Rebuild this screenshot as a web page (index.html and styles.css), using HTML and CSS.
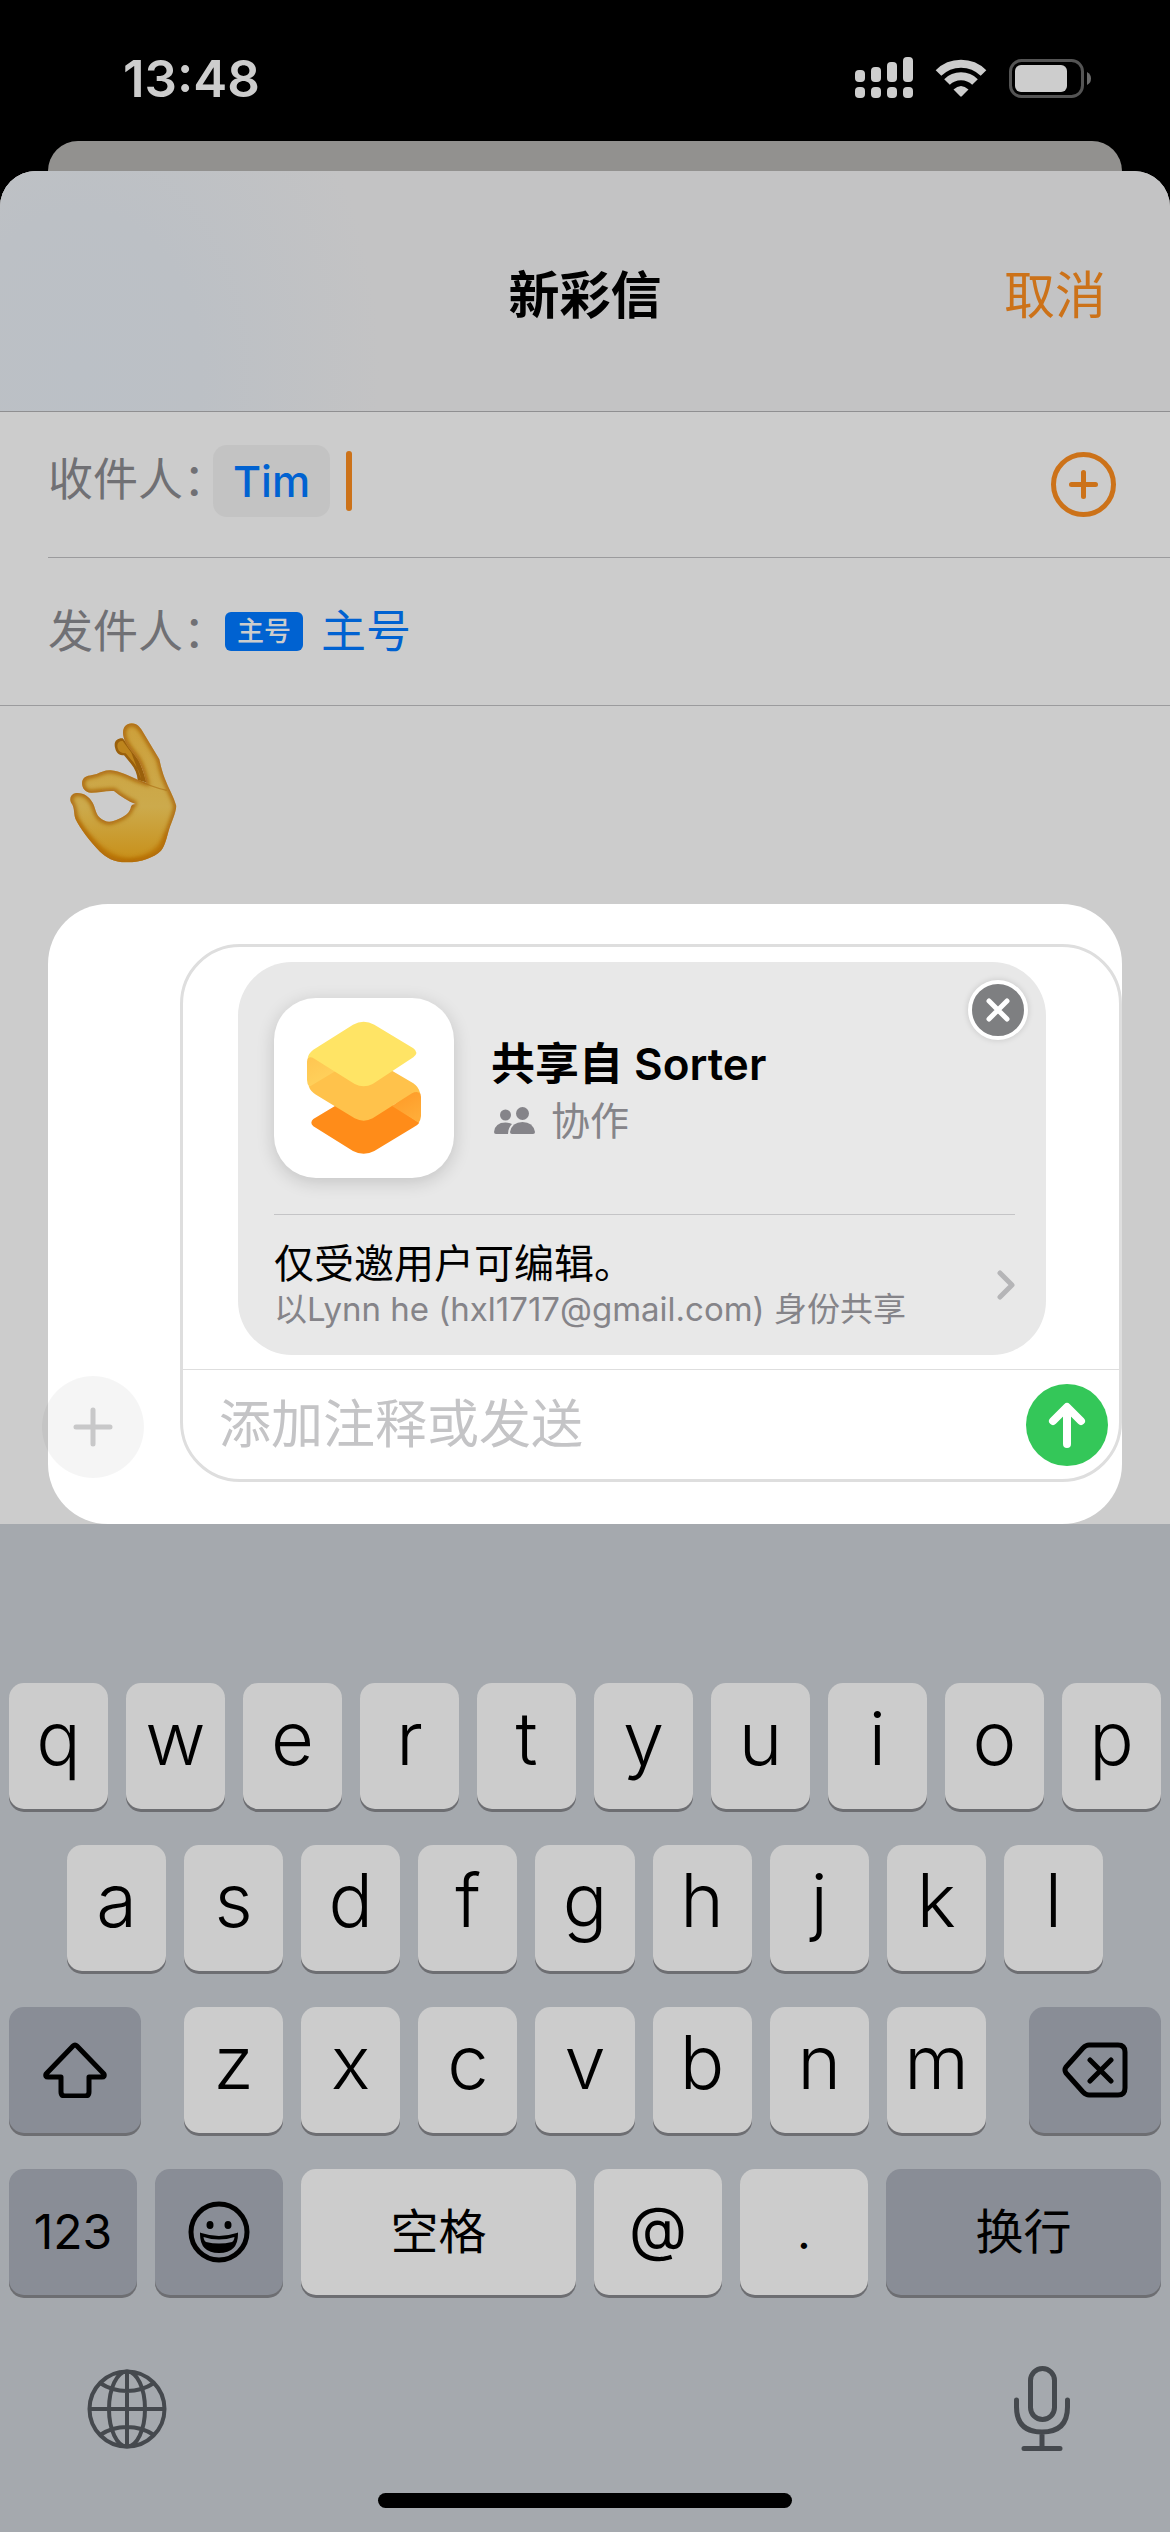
FILE: index.html
```html
<!DOCTYPE html>
<html lang="zh-CN">
<head>
<meta charset="utf-8">
<meta name="viewport" content="width=device-width, initial-scale=1">
<title>新彩信</title>
<link rel="stylesheet" href="styles.css">
</head>
<body>
<div class="status">
  <time class="clock">13:48</time>
  <div class="status-icons">
    <svg width="58" height="42" viewBox="0 0 58 42" fill="#cdcdcd" aria-hidden="true">
      <rect x="0" y="13" width="10" height="12" rx="4"/><rect x="16" y="10" width="10" height="15" rx="4"/><rect x="32" y="5" width="10" height="20" rx="4"/><rect x="48" y="0" width="10" height="25" rx="4"/>
      <rect x="0" y="30" width="10" height="11" rx="4"/><rect x="16" y="30" width="10" height="11" rx="4"/><rect x="32" y="30" width="10" height="11" rx="4"/><rect x="48" y="30" width="10" height="11" rx="4"/>
    </svg>
    <svg width="52" height="38" viewBox="0 0 52 38" aria-hidden="true">
      <g fill="none" stroke="#cdcdcd" stroke-width="8"><path d="M3.500 14 A32 32 0 0 1 48.500 14"/><path d="M12 23 A20 20 0 0 1 40 23"/></g>
      <path d="M18.500 30.500 Q26 23.500 33.500 30.500 L26.800 37.300 Q26 38 25.200 37.300Z" fill="#cdcdcd"/>
    </svg>
    <svg width="83" height="39" viewBox="0 0 83 39" aria-hidden="true">
      <rect x="1.500" y="1.500" width="72" height="36" rx="11" fill="none" stroke="#545454" stroke-width="3"/>
      <rect x="6" y="6" width="52" height="27" rx="6" fill="#cdcdcd"/><path d="M78 13 Q82 15 82 19.500 Q82 24 78 26Z" fill="#6a6a6a"/>
    </svg>
  </div>
</div>
<div class="back-sheet"></div>
<main class="sheet">
  <header class="header">
    <h1>新彩信</h1>
    <button class="cancel">取消</button>
  </header>
  <div class="row row-to">
    <label for="to">收件人：</label>
    <button class="chip">Tim</button>
    <span class="caret"></span>
    <input id="to" class="to-input" type="text">
    <button class="icon-btn" aria-label="添加联系人">
      <svg width="65" height="65" viewBox="0 0 65 65" fill="none" stroke="#cc7219" stroke-width="5" stroke-linecap="round"><circle cx="32.500" cy="32.500" r="30"/><path d="M20.500 32.500h24M32.500 20.500v24"/></svg>
    </button>
  </div>
  <div class="row row-from">
    <span class="label">发件人：</span>
    <button class="line"><span class="badge">主号</span><span>主号</span></button>
  </div>
  <div class="transcript">
    <svg class="hand" width="150" height="180" viewBox="0 0 450 540" role="img" aria-label="OK">
      <defs>
        <filter id="soft" x="-20%" y="-20%" width="140%" height="140%"><feGaussianBlur stdDeviation="7"/></filter>
        <linearGradient id="skin" x1="0" y1="0" x2="0" y2="1"><stop offset="0" stop-color="#cda03a"/><stop offset=".6" stop-color="#ccaa4c"/><stop offset="1" stop-color="#c88f17"/></linearGradient>
        <path id="palm" d="M221 112C214 86 227 70 245 70C262 70 270 82 277 93L328 178C333 200 337 217 345 237C355 264 371 290 379 318C378 337 365 366 358 386C350 410 347 434 333 452C312 472 275 487 230 487C190 487 168 472 150 455C118 422 90 385 77 358C71 342 74 325 66 312C56 298 61 282 78 279C100 277 118 290 128 308C137 325 136 338 148 352C162 365 176 368 190 363C214 355 236 345 242 325C243 317 246 313 257 312C235 304 212 290 192 273C170 271 145 278 125 278C100 279 92 254 98 240C104 226 122 227 140 222C155 216 165 210 182 211C210 213 240 229 265 240L289 248C283 226 276 198 263 178C250 158 226 136 221 112Z"/>
        <clipPath id="palmClip"><use href="#palm"/></clipPath>
      </defs>
      <path d="M196 146C189 125 201 114 218 115L262 165L292 248L263 240C262 222 255 205 243 191L222 166C208 166 199 159 196 146Z" fill="#9a600c"/>
      <path d="M203 144C199 130 207 122 218 123L244 158L273 236C270 220 263 204 250 187L227 160C214 160 206 155 203 144Z" fill="#bd841d"/>
      <use href="#palm" fill="url(#skin)"/>
      <g clip-path="url(#palmClip)"><use href="#palm" fill="none" stroke="#a96408" stroke-width="15" filter="url(#soft)"/><path d="M66 345Q150 475 235 483Q325 475 352 398" fill="none" stroke="#b96f06" stroke-width="14" opacity=".7" filter="url(#soft)"/></g>
      <path d="M265 240Q300 260 350 271" fill="none" stroke="#a86d13" stroke-width="4" opacity=".6"/>
    </svg>
  </div>
  <section class="composer">
    <button class="plus" aria-label="更多">
      <svg width="40" height="40" viewBox="0 0 40 40" stroke="#c8c8c9" stroke-width="5" stroke-linecap="round"><path d="M3 20h34M20 3v34"/></svg>
    </button>
    <div class="bubble">
      <article class="share">
        <button class="close" aria-label="移除">
          <svg width="24" height="24" viewBox="0 0 24 24" stroke="#fff" stroke-width="5" stroke-linecap="round"><path d="M3 3L21 21M21 3L3 21"/></svg>
        </button>
        <div class="app">
          <svg class="app-icon" width="180" height="180" viewBox="44 54 540 540" aria-hidden="true">
            <defs>
              <linearGradient id="foldL" x1="0" y1="0" x2=".5" y2="1"><stop offset="0" stop-color="#ffc551"/><stop offset="1" stop-color="#ffd25c"/></linearGradient>
              <linearGradient id="foldR" x1="0" y1="0" x2=".5" y2="1"><stop offset="0" stop-color="#ff9825"/><stop offset="1" stop-color="#ffac38"/></linearGradient>
            </defs>
            <path d="M162 417L232 375H400L480 428Q475 435 464 441L345 513Q313 530 281 513L162 439Q150 428 162 417Z" fill="#ff8c19"/>
            <path d="M398 378L450 338Q484 324 485 350V408Q484 421 478 428Z" fill="url(#foldR)"/>
            <path d="M148 318L228 270L398 272L462 310Q478 320 483 341Q474 331 458 340L340 415Q313 429 286 415L170 344Q153 334 148 318Z" fill="#ffc24b"/>
            <path d="M143 245Q144 222 170 232L230 272L150 320Q143 312 143 300Z" fill="url(#foldL)"/>
            <path d="M281 134Q313 117 345 134L462 205Q480 218 462 232L340 312Q313 326 286 312L165 236Q152 228 145 235Q147 220 162 209Z" fill="#ffe465"/>
          </svg>
          <div class="app-text">
            <h2>共享自 Sorter</h2>
            <p class="collab">
              <svg width="42" height="28" viewBox="0 0 42 28" fill="#858489" aria-hidden="true"><ellipse cx="11.500" cy="8" rx="5.500" ry="5.500"/><path d="M0 25Q1 15.500 11.500 15.500Q15 15.500 18 17Q14 21 14 27H2Q0 27 0 25Z"/><circle cx="28.500" cy="6.500" r="6.500"/><path d="M16 25Q18 15 28.500 15Q39 15 41 25Q41 27 39 27H18Q16 27 16 25Z"/></svg>
              <span>协作</span>
            </p>
          </div>
        </div>
        <button class="access">
          <span class="access-text"><span class="perm">仅受邀用户可编辑。</span><span class="by">以Lynn he (hxl1717@gmail.com) 身份共享</span></span>
          <svg width="18" height="30" viewBox="0 0 18 30" fill="none" stroke="#b5b5b7" stroke-width="5" stroke-linecap="round" stroke-linejoin="round"><path d="M3 3L15 15L3 27"/></svg>
        </button>
      </article>
      <div class="entry">
        <input type="text" aria-label="添加注释或发送" placeholder="添加注释或发送">
        <button class="send" aria-label="发送">
          <svg width="38" height="46" viewBox="0 0 38 46" fill="none" stroke="#fff" stroke-width="8" stroke-linecap="round" stroke-linejoin="round"><path d="M19 42V6M5 19L19 5L33 19"/></svg>
        </button>
      </div>
    </div>
  </section>
</main>
<section class="keyboard" aria-label="键盘">
  <div class="keys">
    <button>q</button><button>w</button><button>e</button><button>r</button><button>t</button><button>y</button><button>u</button><button>i</button><button>o</button><button>p</button>
  </div>
  <div class="keys keys-home">
    <button>a</button><button>s</button><button>d</button><button>f</button><button>g</button><button>h</button><button>j</button><button>k</button><button>l</button>
  </div>
  <div class="keys keys-lower">
    <button class="dark wide" aria-label="Shift"><svg width="64" height="56" viewBox="0 0 64 56" fill="none" stroke="#000" stroke-width="5" stroke-linejoin="round"><path d="M30 4Q32 2 34 4L61 32Q62 35 59 35H46V50Q46 54 42 54H22Q18 54 18 50V35H5Q2 35 3 32Z"/></svg></button>
    <div class="keys-group"><button>z</button><button>x</button><button>c</button><button>v</button><button>b</button><button>n</button><button>m</button></div>
    <button class="dark wide" aria-label="删除"><svg width="66" height="56" viewBox="0 0 66 56" fill="none" stroke="#000" stroke-width="5" stroke-linecap="round" stroke-linejoin="round"><path d="M27 3H56Q63 3 63 10V46Q63 53 56 53H27Q24 53 21 50L4 31Q2 28 4 25L21 6Q24 3 27 3ZM28 18L49 39M49 18L28 39"/></svg></button>
  </div>
  <div class="keys keys-bottom">
    <button class="dark">123</button>
    <button class="dark" aria-label="表情"><svg width="62" height="62" viewBox="0 0 62 62"><circle cx="31" cy="31" r="28" fill="none" stroke="#000" stroke-width="5"/><ellipse cx="22" cy="24" rx="3.500" ry="4"/><ellipse cx="40" cy="24" rx="3.500" ry="4"/><path d="M13 33Q31 39 49 33Q49 51 31 51Q13 51 13 33Z" fill="#000" stroke="#000" stroke-width="2"/><path d="M15.500 36Q31 41 46.500 36Q46 40 44 41Q31 44 18 41Q16 40 15.500 36Z" fill="#898d96"/></svg></button>
    <button class="space">空格</button>
    <button class="at">@</button>
    <button>.</button>
    <button class="dark return">换行</button>
  </div>
  <div class="dock">
    <button aria-label="切换键盘"><svg width="80" height="80" viewBox="0 0 80 80" fill="none" stroke="#45494e" stroke-width="4"><circle cx="40" cy="40" r="37.500"/><ellipse cx="40" cy="40" rx="18" ry="37.500"/><path d="M40 2V78M2 40H78M13 14Q25 22 40 22Q55 22 67 14M13 66Q25 58 40 58Q55 58 67 66"/></svg></button>
    <button aria-label="听写"><svg width="56" height="86" viewBox="0 0 56 86" fill="none" stroke="#45494e" stroke-width="5" stroke-linecap="round"><rect x="16.500" y="2.500" width="24" height="51" rx="12"/><path d="M2.500 34V41Q2.500 66 28 66Q53.500 66 53.500 41V34M28 67V82M10 82.500H46"/></svg></button>
  </div>
  <div class="home"></div>
</section>
</body>
</html>
```
FILE: styles.css
```css
* { box-sizing: border-box; }

body {
  margin: 0;
  min-height: 100vh;
  display: flex;
  flex-direction: column;
  background: #000;
  color: #000;
  font-family: Inter, "Noto Sans CJK SC", sans-serif;
}

button {
  margin: 0;
  padding: 0;
  border: 0;
  background: none;
  color: inherit;
  font: inherit;
}

svg { display: block; flex: none; }
h1, h2, p { margin: 0; }

/* Status bar */
.status {
  display: flex;
  justify-content: space-between;
  align-items: center;
  height: 141px;
  padding: 15px 78px 0 123px;
}
.clock { color: #cdcdcd; font-size: 51px; font-weight: 600; }
.status-icons { display: flex; align-items: center; gap: 22px; }

/* Sheet */
.back-sheet {
  height: 30px;
  margin: 0 48px;
  border-radius: 30px 30px 0 0;
  background: #92918f;
}
.sheet {
  flex: 1;
  border-radius: 36px 36px 0 0;
  background: #ccc;
}
.header {
  display: grid;
  grid-template-columns: 1fr auto 1fr;
  align-items: center;
  height: 241px;
  padding: 10px 64px 0;
  border-bottom: 1px solid #8f8f91;
  border-radius: 36px 36px 0 0;
  background:
    radial-gradient(ellipse 300px 400px at 80px 200px, #bbc0c6, #bcc0c5 40%, transparent),
    #c3c3c4;
}
h1 { grid-column: 2; font-size: 51px; font-weight: 600; line-height: 60px; }
.cancel { justify-self: end; color: #cc7219; font-size: 51px; line-height: 60px; }

.row {
  display: flex;
  align-items: center;
  margin-left: 48px;
  padding-right: 54px;
  color: #707074;
  font-size: 45px;
  line-height: 54px;
}
.row-to { height: 146px; border-bottom: 1px solid #9b9b9d; }
.row-from { height: 147px; }
.row-to label, .row-from .label { width: 165px; white-space: nowrap; }
.row-to label { margin-bottom: 10px; }
.chip {
  height: 72px;
  margin-bottom: 8px;
  padding: 0 20px;
  border-radius: 14px;
  background: #c3c3c3;
  color: #0062d1;
  font-size: 43px;
  font-weight: 500;
}
.caret {
  width: 6px;
  height: 60px;
  margin: 0 0 8px 16px;
  border-radius: 3px;
  background: #cc7219;
}
.to-input {
  flex: 1;
  min-width: 0;
  padding: 0;
  border: 0;
  outline: 0;
  background: none;
  font: inherit;
}
.line {
  display: flex;
  align-items: center;
  gap: 18px;
  margin-left: 12px;
  color: #0062d1;
}
.badge {
  padding: 0 12px;
  border-radius: 6px;
  background: #0062d1;
  color: #ccc;
  font-size: 27px;
  font-weight: 500;
  line-height: 39px;
}

.transcript { height: 199px; border-top: 1px solid #9b9b9d; }
.hand { margin: -6px 0 0 50px; }

/* Composer */
.composer {
  display: flex;
  align-items: flex-end;
  gap: 36px;
  margin: 0 48px;
  padding: 40px 0 42px;
  border-radius: 60px;
  background: #fff;
}
.plus {
  display: grid;
  place-items: center;
  flex: none;
  width: 102px;
  height: 102px;
  margin: 0 0 4px -6px;
  border-radius: 50%;
  background: rgba(0, 0, 0, .04);
}
.bubble {
  flex: 1;
  min-width: 0;
  border: 3px solid #dedede;
  border-radius: 60px;
}
.share {
  position: relative;
  margin: 15px 73px 14px 55px;
  padding: 36px 31px 0 36px;
  border-radius: 54px;
  background: #e8e8e8;
}
.close {
  position: absolute;
  top: 18px;
  right: 18px;
  display: grid;
  place-items: center;
  width: 60px;
  height: 60px;
  border: 4px solid #fff;
  border-radius: 50%;
  background: #7e7f81;
  box-shadow: 0 0 6px rgba(0, 0, 0, .15);
}
.app {
  display: flex;
  gap: 37px;
  padding-bottom: 36px;
  border-bottom: 1px solid #c4c4c6;
}
.app-icon {
  border-radius: 42px;
  background: #fff;
  box-shadow: 0 4px 18px rgba(0, 0, 0, .16);
}
.app-text { padding-top: 36px; }
h2 { font-size: 44px; font-weight: 600; line-height: 60px; }
.collab {
  display: flex;
  align-items: center;
  gap: 15px;
  padding-left: 3px;
  color: #858489;
  font-size: 39px;
  line-height: 54px;
}
.access {
  display: flex;
  justify-content: space-between;
  align-items: center;
  width: 100%;
  height: 140px;
  text-align: left;
}
.access-text { display: flex; flex-direction: column; white-space: nowrap; }
.perm { font-size: 40px; line-height: 48px; }
.by { color: #858489; font-size: 33px; line-height: 42px; }
.entry {
  display: flex;
  align-items: center;
  height: 110px;
  padding: 0 11px 0 36px;
  border-top: 1px solid #dedede;
}
.entry input {
  flex: 1;
  min-width: 0;
  padding: 0;
  border: 0;
  outline: 0;
  background: none;
  font: inherit;
  font-size: 52px;
}
.entry input::placeholder { color: #c4c4c6; }
.send {
  display: grid;
  place-items: center;
  width: 82px;
  height: 82px;
  border-radius: 50%;
  background: #34c759;
}

/* Keyboard */
.keyboard {
  display: flex;
  flex-direction: column;
  gap: 36px;
  padding: 159px 9px 24px;
  background: #a5a9ae;
}
.keys, .keys-group { display: flex; gap: 18px; }
.keys button {
  display: grid;
  place-items: center;
  flex: 1 1 0;
  min-width: 0;
  height: 126px;
  padding-bottom: 16px;
  border-radius: 15px;
  background: #ccc;
  box-shadow: 0 3px 0 #6d6e72;
  font-size: 74px;
  font-weight: 350;
  line-height: 90px;
}
.keys .dark { background: #898d96; }
.keys-home { padding: 0 58px; }
.keys-lower { gap: 43px; }
.keys-lower .wide { flex: 132 1 0; padding: 0; }
.keys-group { flex: 802 1 0; }
.keys-bottom button { flex: 128 1 0; padding: 0; font-size: 48px; font-weight: 400; }
.keys-bottom .space, .keys-bottom .return { flex-grow: 275; }
.keys-bottom .at { padding-bottom: 8px; font-size: 60px; }
.dock {
  display: flex;
  justify-content: space-between;
  align-items: center;
  height: 86px;
  margin-top: 35px;
  padding: 0 91px 0 78px;
}
.home {
  align-self: center;
  width: 36%;
  height: 15px;
  margin-top: 5px;
  border-radius: 8px;
  background: #000;
}
```
